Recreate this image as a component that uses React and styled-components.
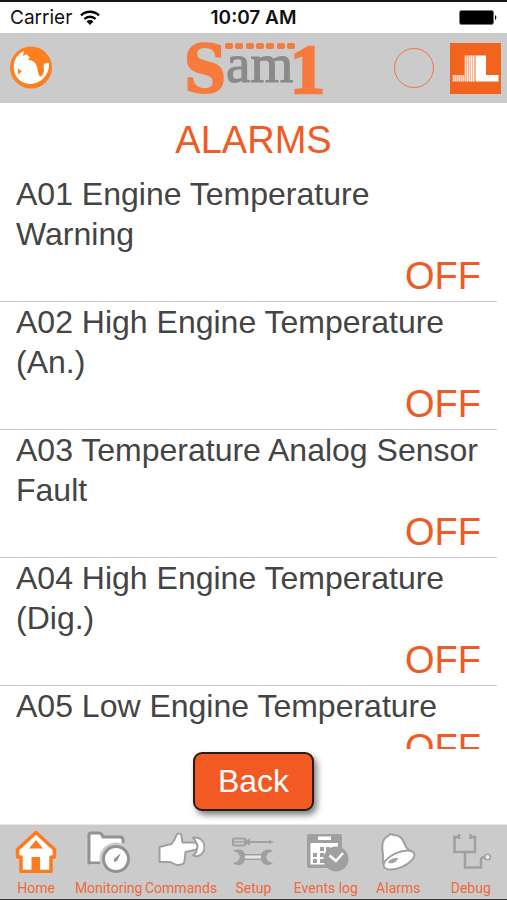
import React from "react";
import styled, { createGlobalStyle } from "styled-components";

const ORANGE = "#f15a22";
const GREY = "#a0a0a0";

const alarms = [
  { title: "A01 Engine Temperature Warning", state: "OFF" },
  { title: "A02 High Engine Temperature (An.)", state: "OFF" },
  { title: "A03 Temperature Analog Sensor Fault", state: "OFF" },
  { title: "A04 High Engine Temperature (Dig.)", state: "OFF" },
  { title: "A05 Low Engine Temperature", state: "OFF" },
];

const WifiIcon = () => (
  <svg width="20" height="16" viewBox="0 0 20 16" fill="none" stroke="#000" strokeWidth="2.4">
    <path d="M1 5.4a13 13 0 0 1 18 0" />
    <path d="M4.4 9a8 8 0 0 1 11.2 0" />
    <path d="M10 15l-3.4-3.6a4.8 4.8 0 0 1 6.8 0z" fill="#000" stroke="none" />
  </svg>
);

const BatteryIcon = () => (
  <svg width="38" height="16" viewBox="0 0 38 16">
    <rect x="0.5" y="0.5" width="34" height="14" rx="2" fill="#000" stroke="#777" />
    <path d="M36 5a3 3 0 0 1 0 5z" fill="#000" />
  </svg>
);

const AnimalLogo = () => (
  <svg width="42" height="44" viewBox="0 0 42 44">
    <circle cx="21" cy="21.5" r="21" fill="#ff7f1e" />
    <path
      d="M14 5l-1 5 4-2 1 2 2 1-2 3c5 0 8 3 9 7 1 3 1 7 3 10 3-2 4-4 4-7 0-2-1-4 0-6 1-1 3-1 5-1 0 3 0 6-1 8-3 8-9 12-17 13-9 0-16-6-17-14C3 15 6 9 14 5z"
      fill="#fff"
    />
    <path d="M8 22.500l4 3-4 3z" fill="#ff7f1e" />
  </svg>
);

const SamLogo = () => (
  <LogoSvg viewBox="0 0 136 58" role="img" aria-label="Sam1">
    <text
      x="-4"
      y="53"
      fontFamily="'DejaVu Serif Condensed', 'DejaVu Serif', serif"
      fontSize="65"
      fontWeight="700"
      fill="#f67b3c"
      stroke="#f67b3c"
      strokeWidth="2"
    >
      S
    </text>
    <g fontFamily="'Liberation Serif', serif">
      <text x="38" y="43" fontSize="55" fill="#8a8a8a" stroke="#8a8a8a" strokeWidth="1.2">
        am
      </text>
      <text x="102" y="54" fontSize="70" fontWeight="700" fill="#f67b3c" stroke="#f67b3c" strokeWidth="2.500">
        1
      </text>
    </g>
    {[37, 47, 58, 68, 78, 89, 99].map((x) => (
      <rect key={x} x={x} y="4" width="8" height="6" rx="2" fill="#f67b3c" />
    ))}
  </LogoSvg>
);

const BrandLogo = () => (
  <svg width="51" height="51" viewBox="0 0 51 51">
    <rect width="51" height="51" fill="#f2641e" />
    <path d="M26 12.5h10V32h12.5v6.500H26z" fill="#fff" />
    <path d="M14.500 12.500H26v26H2.500V32h12z" fill="#fff" opacity="0.5" />
    {[15, 17, 19, 21, 23].map((x, i) => (
      <path key={x} d={`M${x + 0.5} 12.500v26`} stroke="#fff" strokeWidth={0.5 + i * 0.15} />
    ))}
    {[3, 5, 7, 9, 11, 13].map((x) => (
      <path key={x} d={`M${x + 0.5} 32v6.500`} stroke="#fff" strokeWidth="0.5" />
    ))}
  </svg>
);

const HomeIcon = () => (
  <TabSvg>
    <path
      d="M24 3.500L42.500 20.500V28H39v14.500H9V28H5.500v-7.500z"
      fill="#fff"
      stroke="#ff7a1e"
      strokeWidth="3.500"
      strokeLinejoin="round"
    />
    <path d="M24 11l7 8.500h-14zM19.500 28h8.500v14h-8.500z" fill="#ff7a1e" />
  </TabSvg>
);

const MonitoringIcon = () => (
  <TabSvg>
    <path d="M4 4h11l3 4h19v28H4z" fill="#fff" />
    <g stroke="#929292" strokeWidth="3" fill="none">
      <path d="M16 34H4V6q0-2 2-2h8q2 0 3 2l1 2h17q3 0 3 3v3" />
      <circle cx="31" cy="30" r="14" fill="none" stroke="#cbcbcb" strokeWidth="5" />
      <circle cx="31" cy="30" r="12.500" fill="#fff" />
    </g>
    <path d="M36 24l-4 8-3 1v-3z" fill="#929292" />
  </TabSvg>
);

const CommandsIcon = () => (
  <TabSvg>
    <g fill="#fff" stroke={GREY} strokeWidth="2" strokeLinejoin="round">
      <path d="M36 9c6-2 11.500 3 11.500 9 0 7-7 11-11.500 8.500 2.500-1.500 4-5 4-8.500s-1.500-7-4-9z" />
      <path d="M2.500 18l12-3c2-2 4-6 5-9 1-2 5-2 5 1l1 6.500h12c4 1 4 7 0 7.500l-9 2-1 9c0 3-3 4-7 4-3 0-5-3-8-3h-10z" />
    </g>
  </TabSvg>
);

const SetupIcon = () => (
  <TabSvg>
    <g fill="none" stroke={GREY}>
      <rect x="4" y="9.500" width="12" height="7" rx="1.500" strokeWidth="2" />
      <path d="M5 13h10" strokeWidth="1.500" />
      <path d="M21 13h20" strokeWidth="2" />
    </g>
    <path d="M16 9l2.500 2 2.500-2v8l-2.500-2-2.500 2zM40 11l5 2-5 2z" fill={GREY} />
    <path
      d="M4 22c5-3 11-1 12 3h16c2-4 7-6 12-3l-5 2-2 4 2 4 5 2c-5 4-10 2-12-3H16c-2 5-7 7-12 3l5-2 2-4-2-4z"
      fill={GREY}
    />
    <path d="M16 28h16" stroke="#e8e8e8" strokeWidth="3" />
  </TabSvg>
);

const EventsIcon = () => (
  <TabSvg>
    <rect x="5" y="5" width="35" height="34" rx="2" fill={GREY} />
    <path d="M16 7.500h13v3.500H16zM8.500 14H36v21.500H8.500z" fill="#fff" />
    <path
      d="M18 18h4v4h-4zM24 18h4v4h-4zM30 18h4v4h-4zM11 24h4v4h-4zM18 24h4v4h-4zM11 30h4v4h-4zM18 30h4v4h-4z"
      fill={GREY}
    />
    <circle cx="34" cy="30" r="12.500" fill={GREY} />
    <path d="M27.500 26.500l6.500 5.500 7-8" fill="none" stroke="#fff" strokeWidth="2.500" />
  </TabSvg>
);

const AlarmsIcon = () => (
  <TabSvg>
    <g fill="#fff" stroke={GREY} strokeWidth="2" strokeLinejoin="round">
      <path d="M10 36C8 33 9 30 9 26 8 19 7 10 14 7l2-2 4 1c7 0 9 5 12 12 2 3 5 4 8 6z" />
      <ellipse cx="25" cy="31" rx="16.500" ry="7.500" transform="rotate(-24 25 31)" />
    </g>
    <path d="M14 34c1-4 6-5 10-5-1 4-5 6-10 5z" fill={GREY} />
  </TabSvg>
);

const DebugIcon = () => (
  <TabSvg>
    <g fill="none" stroke={GREY} strokeWidth="2.500">
      <path d="M12 5v5M12 8H7.500v15H28V8h-4.500M23.500 5v5" />
      <path d="M18 23v15.500h16V31q0-3 4-3" />
      <circle cx="40.500" cy="28" r="2.800" fill="#eee" strokeWidth="1.500" />
    </g>
  </TabSvg>
);

const tabs = [
  { label: "Home", Icon: HomeIcon },
  { label: "Monitoring", Icon: MonitoringIcon },
  { label: "Commands", Icon: CommandsIcon },
  { label: "Setup", Icon: SetupIcon },
  { label: "Events log", Icon: EventsIcon },
  { label: "Alarms", Icon: AlarmsIcon },
  { label: "Debug", Icon: DebugIcon },
];

const App = () => (
  <Screen>
    <GlobalStyle />
    <StatusBar>
      <Carrier>
        Carrier <WifiIcon />
      </Carrier>
      <Time>10:07 AM</Time>
      <Battery>
        <BatteryIcon />
      </Battery>
    </StatusBar>
    <Header>
      <AnimalLogo />
      <SamLogo />
      <HeaderRight>
        <StatusLight />
        <BrandLogo />
      </HeaderRight>
    </Header>
    <Content>
      <Title>ALARMS</Title>
      <AlarmList>
        {alarms.map(({ title, state }) => (
          <AlarmItem key={title}>
            <AlarmName>{title}</AlarmName>
            <AlarmState>{state}</AlarmState>
          </AlarmItem>
        ))}
      </AlarmList>
    </Content>
    <Actions>
      <BackButton type="button">Back</BackButton>
    </Actions>
    <TabBar>
      {tabs.map(({ label, Icon }) => (
        <Tab href="#" key={label}>
          <Icon />
          <span>{label}</span>
        </Tab>
      ))}
    </TabBar>
  </Screen>
);

export default App;

const GlobalStyle = createGlobalStyle`
  * {
    box-sizing: border-box;
  }
  body {
    margin: 0;
    background: #fff;
    font-family: "Liberation Sans", Arial, sans-serif;
  }
  svg {
    display: block;
    flex-shrink: 0;
  }
`;

const Screen = styled.div`
  height: 100vh;
  display: flex;
  flex-direction: column;
  border-top: 2px solid #151515;
  border-bottom: 1px solid #333;
`;

const StatusBar = styled.div`
  height: 31px;
  padding: 0 10px;
  display: grid;
  grid-template-columns: 1fr auto 1fr;
  align-items: center;
  font-family: Inter, sans-serif;
  font-size: 19px;
  color: #111;
`;
const Carrier = styled.div`
  display: flex;
  align-items: center;
  gap: 8px;
`;
const Time = styled.div`
  font-weight: 600;
`;
const Battery = styled.div`
  justify-self: end;
`;

const Header = styled.header`
  height: 70px;
  padding: 0 6px 0 10px;
  display: grid;
  grid-template-columns: 1fr auto 1fr;
  align-items: center;
  background: #cbcbcb;
`;
const LogoSvg = styled.svg`
  width: 136px;
  height: 58px;
  overflow: visible;
`;
const HeaderRight = styled.div`
  display: flex;
  align-items: center;
  justify-content: flex-end;
  gap: 16px;
`;
const StatusLight = styled.div`
  width: 40px;
  height: 40px;
  border: 1px solid #ee7445;
  border-radius: 50%;
`;

const Content = styled.main`
  flex: 1;
  min-height: 0;
  overflow: hidden;
`;
const Title = styled.h1`
  margin: 0;
  padding: 15px 0 12px;
  font-size: 38px;
  font-weight: 400;
  line-height: 44px;
  text-align: center;
  color: ${ORANGE};
`;
const AlarmList = styled.ul`
  margin: 0 10px 0 0;
  padding: 0;
  list-style: none;
`;
const AlarmItem = styled.li`
  padding: 0 16px 3px;
  border-bottom: 1px solid #c8c8c8;
`;
const AlarmName = styled.div`
  font-size: 32px;
  line-height: 40px;
  color: #444;
`;
const AlarmState = styled.div`
  font-size: 38px;
  line-height: 44px;
  text-align: right;
  color: ${ORANGE};
`;

const Actions = styled.div`
  padding: 3px 0 13px;
  display: flex;
  justify-content: center;
  border-bottom: 1px solid #e8e8e8;
`;
const BackButton = styled.button`
  width: 121px;
  height: 59px;
  padding: 0;
  border: 2px solid #2b1a12;
  border-radius: 9px;
  background: ${ORANGE};
  box-shadow: 3px 4px 6px rgba(0, 0, 0, 0.5);
  font-family: inherit;
  font-size: 32px;
  color: #fff;
`;

const TabBar = styled.nav`
  display: flex;
  background: #cbcbcb;
`;
const Tab = styled.a`
  flex: 1 1 0;
  min-width: 0;
  padding-top: 4px;
  display: flex;
  flex-direction: column;
  align-items: center;
  gap: 5px;
  font-family: Roboto, sans-serif;
  font-size: 14px;
  line-height: 21px;
  white-space: nowrap;
  text-decoration: none;
  color: #ee6a3a;
`;
const TabSvg = styled.svg.attrs({ viewBox: "0 0 48 44" })`
  width: 48px;
  height: 44px;
`;
